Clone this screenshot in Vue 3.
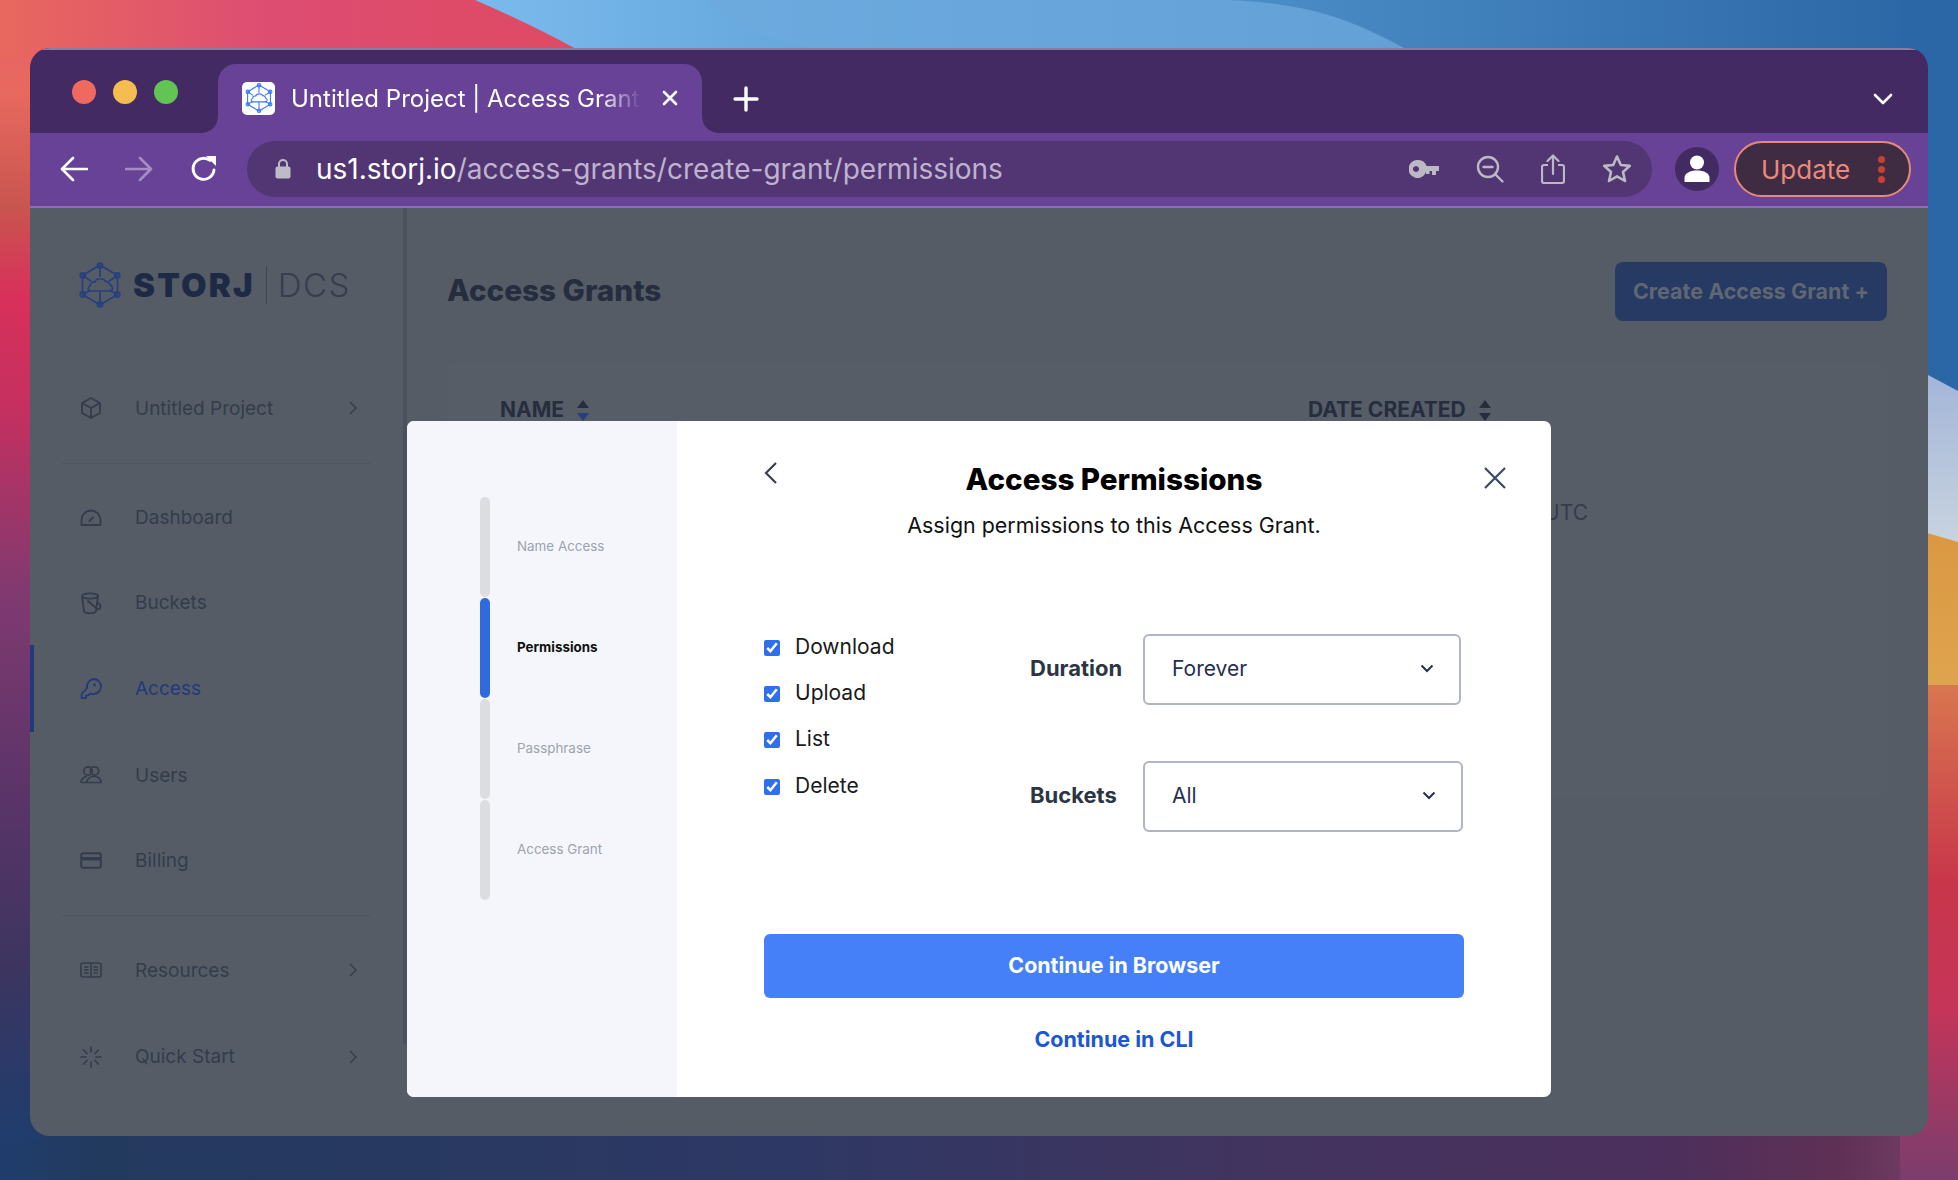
<script setup>
const navTop = [
  { label: 'Dashboard', icon: 'gauge', h: 85 },
  { label: 'Buckets', icon: 'bucket', h: 85 },
  { label: 'Access', icon: 'key', h: 87, active: true },
  { label: 'Users', icon: 'users', h: 86 },
  { label: 'Billing', icon: 'card', h: 85 }
]

const navBottom = [
  { label: 'Resources', icon: 'book', h: 86, more: true },
  { label: 'Quick Start', icon: 'spark', h: 87, more: true }
]

const steps = [
  { label: 'Name Access' },
  { label: 'Permissions', active: true },
  { label: 'Passphrase' },
  { label: 'Access Grant' }
]

const permissions = ['Download', 'Upload', 'List', 'Delete']
</script>

<template>
  <div class="page">
    <svg class="wallpaper" viewBox="0 0 1958 1180" preserveAspectRatio="none">
      <defs>
        <linearGradient id="wpBottom" x1="0" x2="1" y1="0" y2="0">
          <stop offset="0" stop-color="#1f3d6d" />
          <stop offset="0.05" stop-color="#233a5f" />
          <stop offset="0.4" stop-color="#2e3864" />
          <stop offset="0.65" stop-color="#42345f" />
          <stop offset="0.85" stop-color="#4c2f5c" />
          <stop offset="0.94" stop-color="#5f3055" />
          <stop offset="1" stop-color="#7c426c" />
        </linearGradient>
        <linearGradient id="wpLeft" x1="0" x2="0" y1="0" y2="1">
          <stop offset="0" stop-color="#e5606c" />
          <stop offset="0.08" stop-color="#e8695f" />
          <stop offset="0.18" stop-color="#c9564f" />
          <stop offset="0.26" stop-color="#d8305a" />
          <stop offset="0.36" stop-color="#c43060" />
          <stop offset="0.52" stop-color="#803a70" />
          <stop offset="0.7" stop-color="#5a3468" />
          <stop offset="0.85" stop-color="#3c3560" />
          <stop offset="1" stop-color="#1f3d6d" />
        </linearGradient>
        <linearGradient id="wpRed" x1="0" x2="1" y1="0" y2="0">
          <stop offset="0" stop-color="#e8685e" />
          <stop offset="0.45" stop-color="#dd4d72" />
          <stop offset="1" stop-color="#df4a62" />
        </linearGradient>
        <linearGradient id="wpBlue" x1="0" x2="1" y1="0" y2="0">
          <stop offset="0.25" stop-color="#7ab9ec" />
          <stop offset="0.45" stop-color="#5fa3d8" />
          <stop offset="0.7" stop-color="#4586c0" />
          <stop offset="1" stop-color="#2a64a4" />
        </linearGradient>
        <linearGradient id="wpWhite" x1="0" x2="0" y1="0" y2="1">
          <stop offset="0" stop-color="#a0b3d8" />
          <stop offset="1" stop-color="#c9d4e0" />
        </linearGradient>
        <linearGradient id="wpOrange" x1="0" x2="0" y1="0" y2="1">
          <stop offset="0" stop-color="#da9742" />
          <stop offset="1" stop-color="#dfa44e" />
        </linearGradient>
        <linearGradient id="wpRight" x1="0" x2="0" y1="0" y2="1">
          <stop offset="0" stop-color="#d9764f" />
          <stop offset="0.4" stop-color="#c8364a" />
          <stop offset="0.65" stop-color="#c53558" />
          <stop offset="1" stop-color="#7a3d6e" />
        </linearGradient>
      </defs>
      <rect x="0" y="0" width="1958" height="1180" fill="url(#wpBottom)" />
      <rect x="0" y="0" width="40" height="1140" fill="url(#wpLeft)" />
      <rect x="0" y="0" width="1958" height="60" fill="url(#wpBlue)" />
      <path d="M705 0 C760 50 830 50 899 60 H1425 C1340 10 1290 -4 1149 0 Z" fill="#6ea9dd" opacity="0.75" />
      <rect x="1900" y="0" width="58" height="400" fill="#2b66a6" />
      <path d="M0 0 H475 Q540 28 596 60 H0 Z" fill="url(#wpRed)" />
      <path d="M1900 360 L1958 391 V545 L1900 525 Z" fill="url(#wpWhite)" />
      <path d="M1900 525 L1958 542 V685 H1900 Z" fill="url(#wpOrange)" />
      <rect x="1900" y="685" width="58" height="495" fill="url(#wpRight)" />
    </svg>

    <svg class="defs" width="0" height="0">
      <symbol id="storj" viewBox="0 0 42 46">
        <g fill="none" stroke="currentColor" stroke-width="1.7">
          <path d="M21 3 L38.5 13.5 V32.5 L21 43 L3.5 32.5 V13.5 Z" />
          <path d="M21 3 V15 M3.5 13.5 L12 19 M38.5 13.5 L30 19 M21 29 V43 M3.5 32.5 L12 28 M38.5 32.5 L30 28" />
          <path d="M11 29 H31 C34 29 34.5 24 31 23 C30.5 20 28 19 26.5 19.5 C25.5 16 17 15.5 16 20 C13 19.5 11 21 11.5 23.5 C8.5 24.5 8.5 29 11 29 Z" />
          <circle cx="21" cy="3.6" r="2.6" />
          <circle cx="38.2" cy="13.5" r="2.6" />
          <circle cx="38.2" cy="32.5" r="2.6" />
          <circle cx="21" cy="42.4" r="2.6" />
          <circle cx="3.8" cy="32.5" r="2.6" />
          <circle cx="3.8" cy="13.5" r="2.6" />
        </g>
      </symbol>
    </svg>

    <div class="window">
      <div class="tabstrip">
        <div class="lights">
          <span class="light red"></span>
          <span class="light yellow"></span>
          <span class="light green"></span>
        </div>
        <div class="tab">
          <span class="favicon"><svg width="28" height="30"><use href="#storj" /></svg></span>
          <span class="tab-title">Untitled Project | Access Grant</span>
          <svg class="tab-close" width="16" height="16" viewBox="0 0 16 16">
            <path d="M2 2 L14 14 M14 2 L2 14" stroke="#fff" stroke-width="2.6" stroke-linecap="round" />
          </svg>
        </div>
        <svg class="new-tab" width="26" height="26" viewBox="0 0 26 26">
          <path d="M13 2 V24 M2 13 H24" stroke="#fff" stroke-width="3.4" stroke-linecap="round" />
        </svg>
        <svg class="tab-list" width="20" height="12" viewBox="0 0 20 12">
          <path d="M2 2 L10 10 L18 2" fill="none" stroke="#fff" stroke-width="2.6" stroke-linecap="round" stroke-linejoin="round" />
        </svg>
      </div>

      <div class="toolbar">
        <svg class="tool" width="28" height="26" viewBox="0 0 28 26">
          <path d="M27 13 H3 M13 2 L2 13 L13 24" fill="none" stroke="#fff" stroke-width="2.6" stroke-linecap="round" stroke-linejoin="round" />
        </svg>
        <svg class="tool" width="28" height="26" viewBox="0 0 28 26">
          <path d="M1 13 H25 M15 2 L26 13 L15 24" fill="none" stroke="#a48dc3" stroke-width="2.6" stroke-linecap="round" stroke-linejoin="round" />
        </svg>
        <svg class="tool" width="28" height="28" viewBox="0 0 28 28">
          <path d="M24 15 A10.5 10.5 0 1 1 20 5.5" fill="none" stroke="#fff" stroke-width="2.8" stroke-linecap="round" />
          <path d="M16 1 H26 V11 Z" fill="#fff" />
        </svg>

        <div class="address">
          <svg width="16" height="21" viewBox="0 0 16 21">
            <path d="M4 9 V6 a4 4 0 0 1 8 0 V9" fill="none" stroke="#bdbcc6" stroke-width="2" />
            <rect x="0.5" y="8.5" width="15" height="12" rx="2" fill="#bdbcc6" />
          </svg>
          <span class="url"><span class="host">us1.storj.io</span>/access-grants/create-grant/permissions</span>
          <div class="address-icons">
            <svg width="30" height="18" viewBox="0 0 30 18">
              <path fill-rule="evenodd" d="M9 0 a9 9 0 0 1 8.6 6 H30 V11 H27 V15 H23 V11 H20.5 V14 H17 V12 A9 9 0 1 1 9 0 Z M7 6 a3 3 0 1 0 0.01 0 Z" fill="#bdb9c4" />
            </svg>
            <svg width="28" height="28" viewBox="0 0 28 28">
              <circle cx="12" cy="12" r="10" fill="none" stroke="#bdb9c4" stroke-width="2.4" />
              <path d="M7.5 12 H16.5 M19.5 19.5 L26.5 26.5" stroke="#bdb9c4" stroke-width="2.4" stroke-linecap="round" />
            </svg>
            <svg width="24" height="30" viewBox="0 0 24 30">
              <path d="M7 11 H3 a2 2 0 0 0 -2 2 V27 a2 2 0 0 0 2 2 H21 a2 2 0 0 0 2 -2 V13 a2 2 0 0 0 -2 -2 H17" fill="none" stroke="#bdb9c4" stroke-width="2.2" />
              <path d="M12 20 V2 M6.5 7 L12 1.5 L17.5 7" fill="none" stroke="#bdb9c4" stroke-width="2.2" stroke-linecap="round" stroke-linejoin="round" />
            </svg>
            <svg width="30" height="29" viewBox="0 0 30 29">
              <path d="M15 2.5 L18.8 11 L27.8 11.9 L21 18 L23 27 L15 22.3 L7 27 L9 18 L2.2 11.9 L11.2 11 Z" fill="none" stroke="#bdb9c4" stroke-width="2.6" stroke-linejoin="round" />
            </svg>
          </div>
        </div>

        <span class="avatar">
          <svg width="26" height="28" viewBox="0 0 26 28">
            <circle cx="13" cy="7.5" r="7" fill="#fff" />
            <path d="M0.5 27 V23 C0.5 18 6 15.5 13 15.5 C20 15.5 25.5 18 25.5 23 V27 Z" fill="#fff" />
          </svg>
        </span>
        <div class="update">
          <span>Update</span>
          <span class="dots"><i></i><i></i><i></i></span>
        </div>
      </div>

      <div class="body">
        <aside class="sidebar">
          <div class="logo">
            <svg class="logo-mark" width="42" height="46"><use href="#storj" /></svg>
            <span class="logo-word">STORJ</span>
            <span class="logo-sep"></span>
            <span class="logo-dcs">DCS</span>
          </div>

          <div class="nav-row first">
            <svg class="nav-icon" viewBox="0 0 22 24" width="22" height="24">
              <path d="M11 2 L20 7 V17 L11 22 L2 17 V7 Z M2 7 L11 12 L20 7 M11 12 V22" fill="none" stroke="currentColor" stroke-width="1.8" stroke-linejoin="round" />
            </svg>
            <span>Untitled Project</span>
            <svg class="nav-more" width="8" height="14" viewBox="0 0 8 14"><path d="M1 1 L7 7 L1 13" fill="none" stroke="currentColor" stroke-width="1.4" /></svg>
          </div>
          <div class="nav-line"></div>

          <div
            v-for="item in navTop"
            :key="item.label"
            class="nav-row"
            :class="{ active: item.active }"
            :style="{ height: item.h + 'px' }"
          >
            <svg v-if="item.icon === 'gauge'" class="nav-icon" viewBox="0 0 22 24" width="22" height="24">
              <path d="M1.5 19 V14 A9.5 9.5 0 0 1 20.5 14 V19 Z M9.5 15 L13 11.5" fill="none" stroke="currentColor" stroke-width="1.8" stroke-linejoin="round" stroke-linecap="round" />
            </svg>
            <svg v-else-if="item.icon === 'bucket'" class="nav-icon" viewBox="0 0 22 24" width="22" height="24">
              <ellipse cx="10" cy="5" rx="8" ry="2.6" fill="none" stroke="currentColor" stroke-width="1.8" />
              <path d="M2 5 L4 20 C4.5 23 15.5 23 16 20 L18 5 M8 10 L17 18 C21 19 22 14 18 12" fill="none" stroke="currentColor" stroke-width="1.8" stroke-linecap="round" />
            </svg>
            <svg v-else-if="item.icon === 'key'" class="nav-icon" viewBox="0 0 22 24" width="22" height="24">
              <path d="M13.5 2 A7.5 7.5 0 1 1 10.5 16.4 L8 18.5 H6 V21 H1.5 V17 L7.2 11 A7.5 7.5 0 0 1 13.5 2 Z" fill="none" stroke="currentColor" stroke-width="1.8" stroke-linejoin="round" />
              <circle cx="14.5" cy="8" r="1.4" fill="currentColor" />
            </svg>
            <svg v-else-if="item.icon === 'users'" class="nav-icon" viewBox="0 0 22 24" width="22" height="24">
              <circle cx="8" cy="8" r="4.2" fill="none" stroke="currentColor" stroke-width="1.7" />
              <circle cx="14.5" cy="8" r="4.2" fill="none" stroke="currentColor" stroke-width="1.7" />
              <path d="M1 19.5 C1 15 5 13.5 7 13.5 M7 19.5 C7 15.5 10.5 13.5 14 13.5 C18 13.5 21 15.5 21 19.5 Z M1 19.5 H7" fill="none" stroke="currentColor" stroke-width="1.7" stroke-linejoin="round" />
            </svg>
            <svg v-else class="nav-icon" viewBox="0 0 22 24" width="22" height="24">
              <rect x="1.2" y="4.2" width="19.6" height="14.6" rx="2" fill="none" stroke="currentColor" stroke-width="2" />
              <rect x="1.2" y="8" width="19.6" height="3.5" fill="currentColor" />
            </svg>
            <span>{{ item.label }}</span>
          </div>
          <div class="nav-line bottom"></div>

          <div
            v-for="item in navBottom"
            :key="item.label"
            class="nav-row"
            :style="{ height: item.h + 'px' }"
          >
            <svg v-if="item.icon === 'book'" class="nav-icon" viewBox="0 0 22 24" width="22" height="24">
              <rect x="1" y="5" width="20" height="14" rx="2" fill="none" stroke="currentColor" stroke-width="1.6" />
              <path d="M11 5 V19 M4 9 H8.5 M4 12 H8.5 M4 15 H8.5 M13.5 9 H18 M13.5 12 H18 M13.5 15 H18" stroke="currentColor" stroke-width="1.6" />
            </svg>
            <svg v-else class="nav-icon" viewBox="0 0 22 24" width="22" height="24">
              <path d="M11 2 V7 M11 17 V22 M1 12 H6 M16 12 H21 M3.5 5 L7 8.5 M15 15.5 L18.5 19 M3.5 19 L7 15.5 M15 8.5 L18.5 5" stroke="currentColor" stroke-width="1.7" stroke-linecap="round" />
            </svg>
            <span>{{ item.label }}</span>
            <svg class="nav-more" width="8" height="14" viewBox="0 0 8 14"><path d="M1 1 L7 7 L1 13" fill="none" stroke="currentColor" stroke-width="1.4" /></svg>
          </div>
        </aside>

        <main class="main">
          <div class="main-head">
            <h1>Access Grants</h1>
            <button class="create-btn">Create Access Grant +</button>
          </div>
          <div class="grants-card">
            <div class="grants-grid">
              <div class="grants-th">
                NAME
                <span class="sort"><i class="up"></i><i class="down blue"></i></span>
              </div>
              <div class="grants-th">
                DATE CREATED
                <span class="sort"><i class="up"></i><i class="down"></i></span>
              </div>
            </div>
            <div class="grants-grid row">
              <div>My Access</div>
              <div class="date">Oct 20 2021 16:21:08 UTC</div>
            </div>
          </div>
        </main>

        <section class="modal">
          <div class="modal-steps">
            <div v-for="step in steps" :key="step.label" class="step" :class="{ active: step.active }">
              <span class="step-bar"></span>
              <span class="step-label">{{ step.label }}</span>
            </div>
          </div>

          <div class="modal-pane">
            <svg class="modal-back" width="14" height="24" viewBox="0 0 14 24">
              <path d="M12 2 L2 12 L12 22" fill="none" stroke="#384152" stroke-width="2.2" />
            </svg>
            <svg class="modal-close" width="24" height="24" viewBox="0 0 24 24">
              <path d="M2 2 L22 22 M22 2 L2 22" stroke="#384a66" stroke-width="2.2" />
            </svg>

            <h2>Access Permissions</h2>
            <p class="modal-sub">Assign permissions to this Access Grant.</p>

            <div class="perm-form">
              <div class="perm-checks">
                <label v-for="perm in permissions" :key="perm" class="perm-check">
                  <input type="checkbox" checked>
                  <span>{{ perm }}</span>
                </label>
              </div>
              <div class="perm-fields">
                <div class="perm-field">
                  <span class="field-label">Duration</span>
                  <div class="field-select">
                    <span>Forever</span>
                    <svg width="14" height="9" viewBox="0 0 14 9"><path d="M1.5 1.5 L7 7 L12.5 1.5" fill="none" stroke="#25304f" stroke-width="2" /></svg>
                  </div>
                </div>
                <div class="perm-field">
                  <span class="field-label">Buckets</span>
                  <div class="field-select wide">
                    <span>All</span>
                    <svg width="14" height="9" viewBox="0 0 14 9"><path d="M1.5 1.5 L7 7 L12.5 1.5" fill="none" stroke="#25304f" stroke-width="2" /></svg>
                  </div>
                </div>
              </div>
            </div>

            <button class="continue-btn">Continue in Browser</button>
            <a class="continue-link">Continue in CLI</a>
          </div>
        </section>
      </div>
    </div>
  </div>
</template>

<style>
html, body {
  margin: 0;
  background: #2b3864;
}
</style>

<style scoped>
.page {
  position: relative;
  width: 1958px;
  height: 1180px;
  padding: 48px 30px 44px;
  box-sizing: border-box;
  overflow: hidden;
  font-family: Inter, "Noto Sans", sans-serif;
}

.wallpaper {
  position: absolute;
  inset: 0;
  width: 100%;
  height: 100%;
}

.defs {
  position: absolute;
}

.window {
  position: relative;
  display: flex;
  flex-direction: column;
  height: 1088px;
  border-radius: 20px;
  overflow: hidden;
}

/* browser chrome */
.tabstrip {
  display: flex;
  align-items: flex-end;
  height: 85px;
  box-sizing: border-box;
  border-top: 2px solid #8b7da3;
  background: #432a63;
}

.lights {
  display: flex;
  gap: 17px;
  align-self: flex-start;
  padding: 30px 0 0 42px;
  width: 146px;
  box-sizing: border-box;
}

.light {
  width: 24px;
  height: 24px;
  border-radius: 50%;
  flex: none;
}

.light.red { background: #ee6a5e; }
.light.yellow { background: #f5bd4f; }
.light.green { background: #61c454; }

.tab {
  position: relative;
  display: flex;
  align-items: center;
  width: 484px;
  height: 69px;
  margin-left: 42px;
  padding: 0 0 1px 24px;
  box-sizing: border-box;
  border-radius: 18px 18px 0 0;
  background: #684297;
}

.tab::before,
.tab::after {
  content: "";
  position: absolute;
  bottom: 0;
  width: 16px;
  height: 16px;
}

.tab::before {
  left: -16px;
  background: radial-gradient(circle at 0 0, transparent 15.5px, #684297 16px);
}

.tab::after {
  right: -16px;
  background: radial-gradient(circle at 100% 0, transparent 15.5px, #684297 16px);
}

.favicon {
  display: flex;
  align-items: center;
  justify-content: center;
  width: 33px;
  height: 33px;
  border-radius: 5px;
  background: #fff;
  color: #3b7bf5;
  flex: none;
}

.tab-title {
  width: 350px;
  margin-left: 16px;
  overflow: hidden;
  white-space: nowrap;
  color: #fff;
  font-size: 24px;
  -webkit-mask-image: linear-gradient(90deg, #000 88%, transparent 100%);
  mask-image: linear-gradient(90deg, #000 88%, transparent 100%);
}

.tab-close {
  margin-left: 21px;
  flex: none;
}

.new-tab {
  margin: 0 0 21px 31px;
}

.tab-list {
  margin: 0 35px 28px auto;
}

.toolbar {
  display: flex;
  align-items: center;
  height: 75px;
  box-sizing: border-box;
  padding: 0 17px 2px 30px;
  border-bottom: 2px solid #8a70b2;
  background: #684297;
}

.tool {
  flex: none;
  margin-right: 37px;
}

.address {
  display: flex;
  align-items: center;
  width: 1405px;
  height: 56px;
  margin-left: -8px;
  padding: 0 20px 0 28px;
  box-sizing: border-box;
  border-radius: 28px;
  background: #523573;
}

.url {
  margin: 1px 0 0 25px;
  font-size: 28px;
  color: #bfb2cf;
  white-space: nowrap;
}

.host {
  color: #fff;
}

.address-icons {
  display: flex;
  align-items: center;
  gap: 37px;
  margin-left: auto;
}

.avatar {
  display: flex;
  align-items: center;
  justify-content: center;
  width: 44px;
  height: 44px;
  margin-left: 23px;
  border-radius: 50%;
  background: #432a63;
  flex: none;
}

.update {
  display: flex;
  align-items: center;
  justify-content: space-between;
  width: 177px;
  height: 56px;
  margin-left: 15px;
  padding: 1px 24px 0 25px;
  box-sizing: border-box;
  border: 2px solid #e58a78;
  border-radius: 28px;
  background: #3f2c42;
  color: #ea8a7c;
  font-size: 26px;
  flex: none;
}

.dots {
  display: flex;
  flex-direction: column;
  gap: 3px;
}

.dots i {
  display: block;
  width: 7px;
  height: 7px;
  border-radius: 50%;
  background: #c8402f;
}

/* dimmed app */
.body {
  position: relative;
  display: flex;
  flex: 1;
  min-height: 0;
  background: #555c66;
  color: #343c4c;
}

.sidebar {
  width: 373px;
  flex: none;
  border-right: 4px solid #4b525e;
  height: 836px;
  box-sizing: content-box;
}

.logo {
  display: flex;
  align-items: center;
  height: 46px;
  padding: 54px 0 58px 49px;
}

.logo-mark {
  color: #26407f;
  flex: none;
}

.logo-word {
  margin-left: 12px;
  font-size: 33px;
  font-weight: 900;
  letter-spacing: 2.2px;
  color: #1e2a45;
}

.logo-sep {
  width: 1px;
  height: 38px;
  margin: 0 11px 0 11px;
  background: #3f4756;
}

.logo-dcs {
  font-size: 33px;
  font-weight: 300;
  letter-spacing: 1.5px;
  color: #363e50;
}

.nav-row {
  position: relative;
  display: flex;
  align-items: center;
  padding: 0 46px 0 50px;
  font-size: 19px;
  color: #343c4c;
}

.nav-row.first {
  height: 84px;
}

.nav-row.active {
  color: #24397a;
}

.nav-row.active::before {
  content: "";
  position: absolute;
  left: 0;
  top: 0;
  bottom: 0;
  width: 4px;
  background: #24397a;
}

.nav-icon {
  width: 22px;
  margin-right: 33px;
  flex: none;
}

.nav-more {
  margin-left: auto;
  flex: none;
}

.nav-line {
  height: 1px;
  margin: 13px 32px 11px;
  background: #4e555f;
}

.nav-line.bottom {
  margin: 12px 32px 11px;
}

.main {
  flex: 1;
  min-width: 0;
  padding: 54px 41px 0 40px;
}

.main-head {
  display: flex;
  align-items: center;
  justify-content: space-between;
}

.main-head h1 {
  margin: -3px 0 0;
  font-size: 29.7px;
  font-weight: 800;
  color: #252d3f;
}

.create-btn {
  width: 272px;
  height: 59px;
  padding-bottom: 3px;
  border: 0;
  border-radius: 8px;
  background: #273a63;
  color: #5f6773;
  font-family: inherit;
  font-size: 21.5px;
  font-weight: 700;
}

.grants-card {
  height: 400px;
  margin-top: 42px;
  padding: 34px 0 0 53px;
  border-radius: 8px;
  background: #565d67;
}

.grants-grid {
  display: grid;
  grid-template-columns: 808px 280px;
  line-height: 26px;
}

.grants-grid.row {
  margin-top: 77px;
  font-size: 21px;
}

.date {
  text-align: right;
  white-space: nowrap;
}

.grants-th {
  display: flex;
  align-items: center;
  gap: 13px;
  font-size: 21px;
  font-weight: 700;
  color: #252d3f;
}

.sort {
  display: flex;
  flex-direction: column;
  gap: 5px;
}

.sort i {
  display: block;
  width: 0;
  height: 0;
  border-left: 6px solid transparent;
  border-right: 6px solid transparent;
}

.sort .up {
  border-bottom: 8px solid #252d3f;
}

.sort .down {
  border-top: 8px solid #252d3f;
}

.sort .down.blue {
  border-top-color: #26407f;
}

/* modal */
.modal {
  position: absolute;
  left: 377px;
  top: 213px;
  display: flex;
  width: 1144px;
  height: 676px;
  border-radius: 7px;
  overflow: hidden;
  background: #fff;
  color: #000;
}

.modal-steps {
  width: 270px;
  padding: 75px 0 0 73px;
  box-sizing: border-box;
  background: #f5f6fb;
  flex: none;
}

.step {
  display: flex;
  align-items: center;
  height: 101px;
}

.step-bar {
  width: 10px;
  height: 100px;
  border-radius: 5px;
  background: #dcdde1;
  flex: none;
}

.step-label {
  margin: -2px 0 0 27px;
  font-size: 13.4px;
  color: #9da3ad;
}

.step.active .step-bar {
  background: #2f6bdc;
}

.step.active .step-label {
  color: #111;
  font-weight: 700;
}

.modal-pane {
  position: relative;
  display: flex;
  flex-direction: column;
  flex: 1;
  padding: 40px 87px 0;
  box-sizing: border-box;
}

.modal-back {
  position: absolute;
  left: 87px;
  top: 40px;
}

.modal-close {
  position: absolute;
  right: 44px;
  top: 45px;
}

.modal-pane h2 {
  margin: 0;
  font-size: 29.6px;
  line-height: 36px;
  font-weight: 800;
  text-align: center;
}

.modal-sub {
  margin: 13px 0 0;
  font-size: 21.45px;
  line-height: 30px;
  text-align: center;
  color: #111;
}

.perm-form {
  display: flex;
  margin-top: 83px;
}

.perm-checks {
  display: flex;
  flex-direction: column;
  width: 266px;
  flex: none;
}

.perm-check {
  display: flex;
  align-items: center;
  height: 46.4px;
  font-size: 21px;
  color: #1a1a1a;
}

.perm-check input {
  width: 16px;
  height: 16px;
  margin: 3px 15px 0 0;
  accent-color: #2f6fed;
}

.perm-fields {
  display: flex;
  flex-direction: column;
  gap: 56px;
  padding-top: 11px;
}

.perm-field {
  display: flex;
  align-items: center;
}

.field-label {
  width: 113px;
  margin-top: -3px;
  font-size: 22px;
  font-weight: 700;
  color: #2b3543;
  flex: none;
}

.field-select {
  display: flex;
  align-items: center;
  justify-content: space-between;
  width: 318px;
  height: 71px;
  padding: 0 25px 3px 27px;
  box-sizing: border-box;
  border: 2px solid #b0b5c4;
  border-radius: 6px;
  font-size: 21px;
  color: #25304f;
}

.field-select.wide {
  width: 320px;
}

.continue-btn {
  height: 64px;
  margin-top: 102px;
  padding-bottom: 3px;
  border: 0;
  border-radius: 6px;
  background: #4580f8;
  color: #fff;
  font-family: inherit;
  font-size: 21.4px;
  font-weight: 700;
}

.continue-link {
  margin-top: 26px;
  font-size: 21.5px;
  line-height: 30px;
  font-weight: 700;
  text-align: center;
  color: #1a56d6;
}
</style>
